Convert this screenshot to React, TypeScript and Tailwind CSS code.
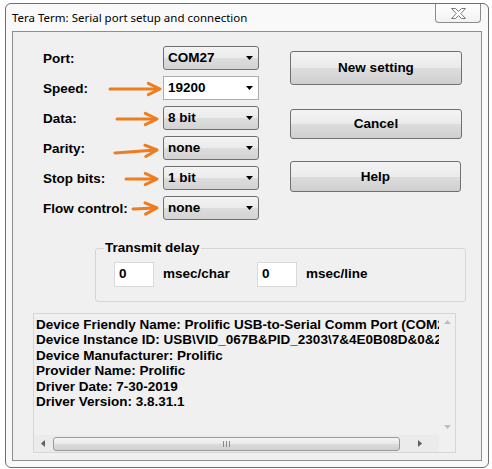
import React from "react";

const F = { fontFamily: '"Liberation Sans", Arial, sans-serif' };

function Tri() {
  return (
    <svg width="7" height="4" viewBox="0 0 7 4" className="shrink-0">
      <polygon points="0,0 7,0 3.5,4" fill="#000" />
    </svg>
  );
}

function Combo({ value, editable }: { value: string; editable?: boolean }) {
  return editable ? (
    <div className="w-[96px] h-[24px] border border-[#abadb3] bg-white flex items-center justify-between pl-[4px] pr-[5px]">
      <span className="font-bold text-[13.5px] text-black pt-[1px]">{value}</span>
      <Tri />
    </div>
  ) : (
    <div className="w-[96px] h-[24px] border border-[#707070] rounded-[3px] bg-[linear-gradient(#f3f3f3,#ebebeb_50%,#dddddd_50%,#d3d3d3)] flex items-center justify-between pl-[4px] pr-[5px]">
      <span className="font-bold text-[13.5px] text-black pt-[1px]">{value}</span>
      <Tri />
    </div>
  );
}

function Btn({ label, h, w = "w-[172px]" }: { label: string; h: string; w?: string }) {
  return (
    <div
      className={`${w} ${h} border border-[#707070] rounded-[3px] bg-[linear-gradient(#f3f3f3,#ebebeb_50%,#dddddd_50%,#cfcfcf)] flex items-center justify-center font-bold text-[13.5px] text-black pt-[1px]`}
    >
      {label}
    </div>
  );
}

const rows: { label: string; value: string; editable?: boolean }[] = [
  { label: "Port:", value: "COM27" },
  { label: "Speed:", value: "19200", editable: true },
  { label: "Data:", value: "8 bit" },
  { label: "Parity:", value: "none" },
  { label: "Stop bits:", value: "1 bit" },
  { label: "Flow control:", value: "none" },
];

const lines = [
  "Device Friendly Name: Prolific USB-to-Serial Comm Port (COM27)",
  "Device Instance ID: USB\\VID_067B&PID_2303\\7&4E0B08D&0&2",
  "Device Manufacturer: Prolific",
  "Provider Name: Prolific",
  "Driver Date: 7-30-2019",
  "Driver Version: 3.8.31.1",
];

function Arrow({ x1, y1, x2, y2 }: { x1: number; y1: number; x2: number; y2: number }) {
  const ang = Math.atan2(y2 - y1, x2 - x1);
  const L = 13;
  const a1 = ang + Math.PI - 0.45;
  const a2 = ang + Math.PI + 0.45;
  const p1 = `${x2 + L * Math.cos(a1)},${y2 + L * Math.sin(a1)}`;
  const p2 = `${x2 + L * Math.cos(a2)},${y2 + L * Math.sin(a2)}`;
  return (
    <g stroke="#ee7d1f" strokeWidth="3" fill="none" strokeLinecap="round" strokeLinejoin="round">
      <line x1={x1} y1={y1} x2={x2 - 1} y2={y2} />
      <polyline points={`${p1} ${x2},${y2} ${p2}`} />
    </g>
  );
}

export default function App() {
  return (
    <div className="relative w-[492px] h-[469px] bg-white overflow-hidden" style={F}>
      <div className="ml-[5px] mt-[3px] w-[484px] h-[465px] border border-[#6f6f6f] rounded-[6px] bg-[#f9f9f9] flex flex-col">
        {/* title bar */}
        <div className="h-[27px] flex items-start justify-between">
          <div
            className="pl-[6px] pt-[6px] text-[11.5px] text-black leading-[16px]"
            style={{ fontFamily: '"Noto Sans", "Open Sans", sans-serif' }}
          >
            Tera Term: Serial port setup and connection
          </div>
          <div className="mr-[7px] w-[46px] h-[19px] border border-t-0 border-[#8c8c8c] rounded-b-[4px] bg-[linear-gradient(#ffffff,#f2f2f2)] flex items-center justify-center">
            <svg width="15" height="11" viewBox="0 0 15 11">
              <polygon
                points="0.5,0.5 4.5,0.5 7.5,3.5 10.5,0.5 14.5,0.5 9.8,5.5 14.5,10.5 10.5,10.5 7.5,7.5 4.5,10.5 0.5,10.5 5.2,5.5"
                fill="#fff"
                stroke="#7a7a7a"
                strokeWidth="1"
              />
            </svg>
          </div>
        </div>
        {/* client */}
        <div className="ml-[6px] w-[470px] h-[430px] border border-[#8e8e8e] bg-[#f0f0f0] flex flex-col">
          <div className="flex pt-[14px]">
            <div className="flex flex-col gap-[6px] pl-[30px]">
              {rows.map((r) => (
                <div key={r.label} className="flex items-center h-[24px]">
                  <div className="w-[120px] font-bold text-[13.5px] text-black pt-[3px]">{r.label}</div>
                  <Combo value={r.value} editable={r.editable} />
                </div>
              ))}
            </div>
            <div className="ml-[31px] pt-[5px] flex flex-col">
              <Btn label="New setting" h="h-[34px]" />
              <div className="h-[24px]" />
              <Btn label="Cancel" h="h-[30px]" />
              <div className="h-[22px]" />
              <Btn label="Help" h="h-[31px]" w="w-[171px]" />
            </div>
          </div>
          {/* group */}
          <div className="relative ml-[82px] mt-[28px] w-[371px] h-[54px] border border-[#d5d5d5] rounded-[3px] flex items-start pt-[13px] pl-[18px]">
            <span className="absolute left-[8px] top-[-9px] px-[1px] bg-[#f0f0f0] font-bold text-[13.5px] leading-[16px] text-black">
              Transmit delay
            </span>
            <div className="w-[40px] h-[25px] border border-[#d9d9d9] bg-white flex items-center pl-[4px] font-bold text-[13.5px]">
              0
            </div>
            <div className="w-[103px] h-[25px] flex items-center pl-[9px] font-bold text-[13.5px] text-black">msec/char</div>
            <div className="w-[40px] h-[25px] border border-[#d9d9d9] bg-white flex items-center pl-[4px] font-bold text-[13.5px]">
              0
            </div>
            <div className="h-[25px] flex items-center pl-[9px] font-bold text-[13.5px] text-black">msec/line</div>
          </div>
          {/* text area */}
          <div className="ml-[20px] mt-[11px] w-[423px] h-[140px] border border-[#d6d6d6] bg-[#f0f0f0] flex flex-col">
            <div className="flex flex-1 min-h-0">
              <div className="flex-1 overflow-hidden pl-[2px] pt-[3px]">
                {lines.map((l) => (
                  <div key={l} className="whitespace-nowrap font-bold text-[13.5px] leading-[15.4px] text-black">
                    {l}
                  </div>
                ))}
              </div>
              <div className="w-[16px] bg-[#f0f0f0] flex flex-col items-center justify-between py-[6px]">
                <svg width="7" height="4" viewBox="0 0 7 4">
                  <polygon points="0,4 7,4 3.5,0" fill="#bdbdbd" />
                </svg>
                <svg width="7" height="4" viewBox="0 0 7 4">
                  <polygon points="0,0 7,0 3.5,4" fill="#bdbdbd" />
                </svg>
              </div>
            </div>
            <div className="h-[17px] flex">
              <div className="flex-1 flex items-center bg-[#ebebeb]">
                <div className="w-[18px] flex items-center justify-center">
                  <svg width="4" height="7" viewBox="0 0 4 7">
                    <polygon points="4,0 4,7 0,3.5" fill="#606060" />
                  </svg>
                </div>
                <div className="ml-[1px] w-[347px] h-[14px] border border-[#9a9a9a] rounded-[3px] bg-[linear-gradient(#f5f5f5,#e8e8e8_50%,#dcdcdc_50%,#d0d0d0)] flex items-center justify-center">
                  <svg width="7" height="6" viewBox="0 0 7 6">
                    <rect x="0" y="0" width="1" height="6" fill="#8a8a8a" />
                    <rect x="3" y="0" width="1" height="6" fill="#8a8a8a" />
                    <rect x="6" y="0" width="1" height="6" fill="#8a8a8a" />
                  </svg>
                </div>
                <div className="flex-1 flex items-center justify-center">
                  <svg width="4" height="7" viewBox="0 0 4 7">
                    <polygon points="0,0 0,7 4,3.5" fill="#606060" />
                  </svg>
                </div>
              </div>
              <div className="w-[16px] bg-[#f0f0f0]" />
            </div>
          </div>
        </div>
      </div>
      {/* annotation arrows */}
      <svg className="absolute inset-0 pointer-events-none" width="492" height="469" viewBox="0 0 492 469">
        <Arrow x1={110} y1={89} x2={160} y2={89} />
        <Arrow x1={117} y1={119} x2={157} y2={119} />
        <Arrow x1={115} y1={153} x2={157} y2={150} />
        <Arrow x1={126} y1={179} x2={157} y2={179} />
        <Arrow x1={133} y1={209} x2={157} y2={208} />
      </svg>
    </div>
  );
}
